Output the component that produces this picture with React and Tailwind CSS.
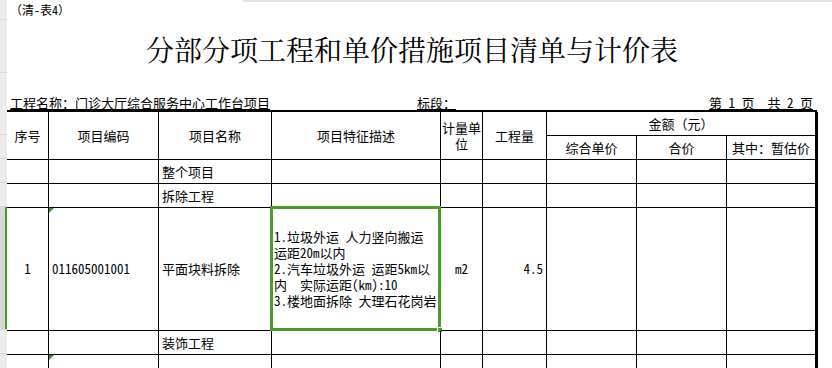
import React from 'react'

const GREEN = 'border-[#4b9a2b]'

// one spreadsheet cell: right + bottom grid line
function Cell({ className = '', children }) {
  return (
    <div className={`relative flex items-center border-r border-b border-black text-[13px] leading-[16px] ${className}`}>
      {children}
    </div>
  )
}

// little green "number stored as text" marker
function Flag() {
  return (
    <svg className="absolute left-0 top-0" width="5" height="5" viewBox="0 0 5 5">
      <polygon points="0,0 5,0 0,5" fill="#3d8f22" />
    </svg>
  )
}

function Gutter() {
  const rows = [
    { h: 'h-[20px]' },
    { h: 'h-[53px]' },
    { h: 'h-[62px]' },
    { h: 'h-[24px]' },
    { h: 'h-[24px]' },
    { h: 'h-[24px]' },
    { h: 'h-[123px]', sel: true },
    { h: 'h-[24px]' },
    { h: 'h-[24px]' },
  ]
  return (
    <div className="flex w-[7px] shrink-0 flex-col bg-[#ececec]">
      {rows.map((r, i) => (
        <div
          key={i}
          className={`${r.h} shrink-0 border-b border-[#d6d6d6] ${r.sel ? 'flex justify-end bg-[#d9d9d9]' : ''}`}
        >
          {r.sel && <div className="h-full w-[2px] bg-[#4b9a2b]" />}
        </div>
      ))}
    </div>
  )
}

export default function App() {
  const desc = [
    '1.垃圾外运 人力竖向搬运',
    '运距20m以内',
    '2.汽车垃圾外运 运距5km以',
    '内  实际运距(km):10',
    '3.楼地面拆除 大理石花岗岩',
  ]

  return (
    <div className="flex h-[368px] overflow-hidden bg-white text-black font-['Noto_Sans_Mono_CJK_SC','Noto_Sans_CJK_SC',sans-serif]">
      <Gutter />

      <div className="flex w-[810px] shrink-0 flex-col">
        {/* sheet caption */}
        <div className="relative flex h-[20px] shrink-0 items-center pl-[3px] text-[12px]">
          <div className="absolute left-[236px] top-0 h-[2px] w-[600px] bg-[#e2e2e2]" />
          （清-表4）
        </div>

        {/* title */}
        <div className="flex h-[53px] shrink-0 items-center justify-center pt-[4px] text-[28px] font-['Noto_Serif_CJK_SC','Noto_Sans_CJK_SC',serif]">
          分部分项工程和单价措施项目清单与计价表
        </div>

        {/* info line */}
        <div className="flex h-[37px] shrink-0 items-end text-[13px] leading-[15px]">
          <div className="w-[410px] pl-[3px]">
            <span className="underline underline-offset-[1px]">工程名称：门诊大厅综合服务中心工作台项目</span>
          </div>
          <div className="flex-1">
            <span className="underline underline-offset-[1px]">标段：</span>
          </div>
          <div className="pr-[4px] whitespace-pre">
            <span className="underline underline-offset-[1px]">第 1 页  共 2 页</span>
          </div>
        </div>

        {/* table */}
        <div className="grid shrink-0 grid-cols-[42px_110px_113px_169px_42px_64px_90px_90px_91px] grid-rows-[24px_24px_24px_24px_123px_24px_24px] border-t-2 border-black">
          {/* header */}
          <Cell className="row-span-2 justify-center">序号</Cell>
          <Cell className="row-span-2 justify-center">项目编码</Cell>
          <Cell className="row-span-2 justify-center">项目名称</Cell>
          <Cell className="row-span-2 justify-center">项目特征描述</Cell>
          <Cell className="row-span-2 justify-center text-center">计量单位</Cell>
          <Cell className="row-span-2 justify-center">工程量</Cell>
          <Cell className="col-span-3 justify-center border-r-[3px]">金额（元）</Cell>
          <Cell className="justify-center">综合单价</Cell>
          <Cell className="justify-center">合价</Cell>
          <Cell className="justify-center border-r-[3px]">其中：暂估价</Cell>

          {/* 整个项目 */}
          <Cell />
          <Cell />
          <Cell className="pl-[3px]">整个项目</Cell>
          <Cell />
          <Cell />
          <Cell />
          <Cell />
          <Cell />
          <Cell className="border-r-[3px]" />

          {/* 拆除工程 */}
          <Cell />
          <Cell />
          <Cell className="pl-[3px]">拆除工程</Cell>
          <Cell />
          <Cell />
          <Cell />
          <Cell />
          <Cell />
          <Cell className="border-r-[3px]" />

          {/* item 1 */}
          <Cell className="justify-center">1</Cell>
          <Cell className="pl-[3px]">
            <Flag />
            011605001001
          </Cell>
          <Cell className="pl-[3px]">平面块料拆除</Cell>
          <Cell className="pl-[2px]">
            <div>
              {desc.map((l) => (
                <div key={l} className="whitespace-pre">{l}</div>
              ))}
            </div>
            {/* active cell selection */}
            <div className={`pointer-events-none absolute -left-[2px] -top-[2px] -right-[1px] -bottom-[1px] border-[3px] ${GREEN}`} />
            <div className="absolute -bottom-[3px] -right-[3px] h-[6px] w-[6px] border border-white bg-[#4b9a2b]" />
          </Cell>
          <Cell className="justify-center">m2</Cell>
          <Cell className="justify-end pr-[3px]">4.5</Cell>
          <Cell />
          <Cell />
          <Cell className="border-r-[3px]" />

          {/* 装饰工程 */}
          <Cell />
          <Cell />
          <Cell className="pl-[3px]">装饰工程</Cell>
          <Cell />
          <Cell />
          <Cell />
          <Cell />
          <Cell />
          <Cell className="border-r-[3px]" />

          {/* next row, cut off */}
          <Cell />
          <Cell>
            <Flag />
          </Cell>
          <Cell />
          <Cell />
          <Cell />
          <Cell />
          <Cell />
          <Cell />
          <Cell className="border-r-[3px]" />
        </div>
      </div>
    </div>
  )
}
